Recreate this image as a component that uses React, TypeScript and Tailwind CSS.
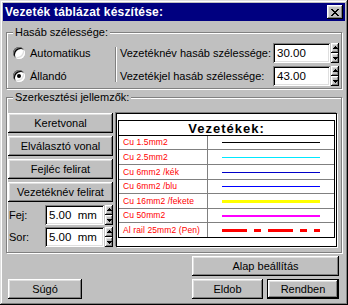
import React from "react";

const raised =
  "bg-[#c0c0c0] shadow-[inset_-1px_-1px_0_#000,inset_1px_1px_0_#fff,inset_-2px_-2px_0_#808080,inset_2px_2px_0_#dfdfdf]";
const sunken =
  "bg-white shadow-[inset_1px_1px_0_#808080,inset_-1px_-1px_0_#fff,inset_2px_2px_0_#000,inset_-2px_-2px_0_#dfdfdf]";
const etched = "border border-[#808080] shadow-[inset_1px_1px_0_#fff,1px_1px_0_#fff]";

function CloseX() {
  const rows = [
    [0, 1, 6, 7],
    [1, 2, 5, 6],
    [2, 3, 4, 5],
    [3, 4],
    [2, 3, 4, 5],
    [1, 2, 5, 6],
    [0, 1, 6, 7],
  ];
  return (
    <svg width="8" height="7" viewBox="0 0 8 7" shapeRendering="crispEdges">
      {rows.map((r, y) =>
        r.map((x) => <rect key={`${x}-${y}`} x={x} y={y} width="1" height="1" fill="#000" />)
      )}
    </svg>
  );
}

function Radio({ checked }: { checked?: boolean }) {
  return (
    <div className="w-[12px] h-[12px] rounded-full bg-white shadow-[inset_1px_1px_0_#808080,inset_-1px_-1px_0_#fff,inset_2px_2px_0_#000,inset_-2px_-2px_0_#dfdfdf] flex items-center justify-center shrink-0">
      {checked ? <div className="w-[4px] h-[4px] rounded-full bg-black" /> : null}
    </div>
  );
}

function Spin() {
  return (
    <div className="flex flex-col w-[8px] h-[20px] shrink-0">
      <div className={`h-[10px] ${raised} flex items-center justify-center`}>
        <svg width="5" height="4" viewBox="0 0 5 4" shapeRendering="crispEdges">
          <rect x="2" y="0" width="1" height="1" fill="#000" />
          <rect x="1" y="1" width="3" height="1" fill="#000" />
          <rect x="0" y="2" width="5" height="1" fill="#000" />
        </svg>
      </div>
      <div className={`h-[10px] ${raised} flex items-center justify-center`}>
        <svg width="5" height="4" viewBox="0 0 5 4" shapeRendering="crispEdges">
          <rect x="0" y="1" width="5" height="1" fill="#000" />
          <rect x="1" y="2" width="3" height="1" fill="#000" />
          <rect x="2" y="3" width="1" height="1" fill="#000" />
        </svg>
      </div>
    </div>
  );
}

function Field({ value, w }: { value: string; w: string }) {
  return (
    <div className={`${w} h-[20px] ${sunken} pl-[4px] flex items-center shrink-0 whitespace-pre text-[11.5px]`}>
      {value}
    </div>
  );
}

function WidthRow({ label, value }: { label: string; value: string }) {
  return (
    <div className="h-[20px] flex items-center">
      <span className="flex-1 whitespace-nowrap">{label}</span>
      <Field value={value} w="w-[57px]" />
      <div className="ml-[1px]">
        <Spin />
      </div>
    </div>
  );
}

function Button({ children, className }: { children: React.ReactNode; className: string }) {
  return (
    <div className={`${className} h-[20px] ${raised} flex items-center justify-center whitespace-nowrap`}>
      {children}
    </div>
  );
}

type Row = { name: string; h: string; last?: boolean; line: React.ReactNode };

const rows: Row[] = [
  { name: "Cu 1.5mm2", h: "h-[14px]", line: <div className="w-[98px] h-[1px] bg-black" /> },
  { name: "Cu 2.5mm2", h: "h-[15px]", line: <div className="w-[98px] h-[1px] bg-[#00e8ff]" /> },
  { name: "Cu 6mm2 /kék", h: "h-[15px]", line: <div className="w-[98px] h-[1px] bg-[#0000c8]" /> },
  { name: "Cu 6mm2 /blu", h: "h-[14px]", line: <div className="w-[98px] h-[1px] bg-[#0000ff]" /> },
  { name: "Cu 16mm2 /fekete", h: "h-[15px]", line: <div className="w-[98px] h-[3px] bg-[#ffff00]" /> },
  { name: "Cu 50mm2", h: "h-[14px]", line: <div className="w-[98px] h-[2px] bg-[#ff00ff]" /> },
  {
    name: "Al rail 25mm2 (Pen)",
    h: "h-[14px]",
    last: true,
    line: (
      <svg width="98" height="3" viewBox="0 0 98 3" shapeRendering="crispEdges">
        <line x1="0" y1="1.5" x2="98" y2="1.5" stroke="#ff0000" strokeWidth="3" strokeDasharray="25 7 7 7" />
      </svg>
    ),
  },
];

function Preview() {
  return (
    <div className="ml-[3px] w-[221px] h-[134px] bg-white border border-black shadow-[-1px_-1px_0_#808080,1px_1px_0_#fff] flex flex-col">
      <div className="mt-[6px] mx-[1px] border border-black flex flex-col">
        <div className="h-[15px] border-b border-black flex items-center justify-center font-bold text-[13px] tracking-[1px]">
          Vezetékek:
        </div>
        {rows.map((r) => (
          <div
            key={r.name}
            className={`${r.h} flex ${r.last ? "" : "border-b border-[#808080]"}`}
          >
            <div className="w-[89px] border-r border-[#808080] pl-[4px] flex items-center text-[#ff0000] text-[8.5px] tracking-[0.1px] whitespace-nowrap overflow-hidden">
              {r.name}
            </div>
            <div className="flex-1 pl-[14px] flex items-center">{r.line}</div>
          </div>
        ))}
      </div>
    </div>
  );
}

export default function App() {
  return (
    <div className="w-[348px] h-[305px] bg-[#c0c0c0] p-[3px] flex flex-col text-[11px] leading-[13px] text-black font-['Liberation_Sans',Arial,sans-serif] shadow-[inset_-1px_-1px_0_#000,inset_1px_1px_0_#dfdfdf,inset_-2px_-2px_0_#808080,inset_2px_2px_0_#fff] overflow-hidden">
      <div className="h-[18px] bg-[#000080] flex items-center justify-between pl-[2px] pr-[2px] shrink-0">
        <span className="text-white font-bold text-[12px] tracking-[0.2px] whitespace-nowrap">
          Vezeték táblázat készítése:
        </span>
        <div className={`w-[16px] h-[14px] ${raised} flex items-center justify-center`}>
          <CloseX />
        </div>
      </div>

      <div className="px-[3px] flex flex-col">
        {/* Group 1 */}
        <div className={`mt-[11px] h-[57px] ${etched} flex flex-col`}>
          <div className="-mt-[7px] ml-[6px] self-start bg-[#c0c0c0] px-[2px] h-[13px] leading-[13px]">
            Hasáb szélessége:
          </div>
          <div className="mt-[4px] flex pl-[6px] pr-[2px]">
            <div className="w-[102px] flex flex-col gap-[3px]">
              <div className="h-[20px] flex items-center gap-[5px]">
                <Radio />
                <span>Automatikus</span>
              </div>
              <div className="h-[20px] flex items-center gap-[5px]">
                <Radio checked />
                <span>Állandó</span>
              </div>
            </div>
            <div className="self-center h-[35px] w-[2px] border-l border-[#808080] bg-white" />
            <div className="ml-[3px] flex-1 flex flex-col gap-[3px]">
              <WidthRow label="Vezetéknév hasáb szélessége:" value="30.00" />
              <WidthRow label="Vezetékjel hasáb szélessége:" value="43.00" />
            </div>
          </div>
        </div>

        {/* Group 2 */}
        <div className={`mt-[8px] h-[156px] ${etched} flex flex-col`}>
          <div className="-mt-[7px] ml-[6px] self-start bg-[#c0c0c0] px-[2px] h-[13px] leading-[13px]">
            Szerkesztési jellemzők:
          </div>
          <div className="mt-[9px] flex pl-[1px]">
            <div className="w-[105px] flex flex-col">
              <Button className="w-[105px]">Keretvonal</Button>
              <Button className="w-[105px] mt-[3px]">Elválasztó vonal</Button>
              <Button className="w-[105px] mt-[3px]">Fejléc felirat</Button>
              <Button className="w-[105px] mt-[3px]">Vezetéknév felirat</Button>
              <div className="mt-[3px] h-[20px] flex items-center">
                <span className="w-[37px] pl-[1px]">Fej:</span>
                <Field value="5.00  mm" w="w-[59px]" />
                <div className="ml-[1px]">
                  <Spin />
                </div>
              </div>
              <div className="mt-[2px] h-[20px] flex items-center">
                <span className="w-[37px] pl-[1px]">Sor:</span>
                <Field value="5.00  mm" w="w-[59px]" />
                <div className="ml-[1px]">
                  <Spin />
                </div>
              </div>
            </div>
            <Preview />
          </div>
        </div>

        {/* Bottom buttons */}
        <div className="mt-[3px] flex justify-end pr-[3px]">
          <Button className="w-[147px]">Alap beállítás</Button>
        </div>
        <div className="mt-[3px] flex items-center pl-[2px] pr-[3px]">
          <Button className="w-[74px]">Súgó</Button>
          <div className="flex-1" />
          <Button className="w-[71px]">Eldob</Button>
          <div className="ml-[4px] w-[72px] h-[20px] border border-black flex">
            <div className={`flex-1 ${raised} flex items-center justify-center`}>Rendben</div>
          </div>
        </div>
      </div>
    </div>
  );
}
